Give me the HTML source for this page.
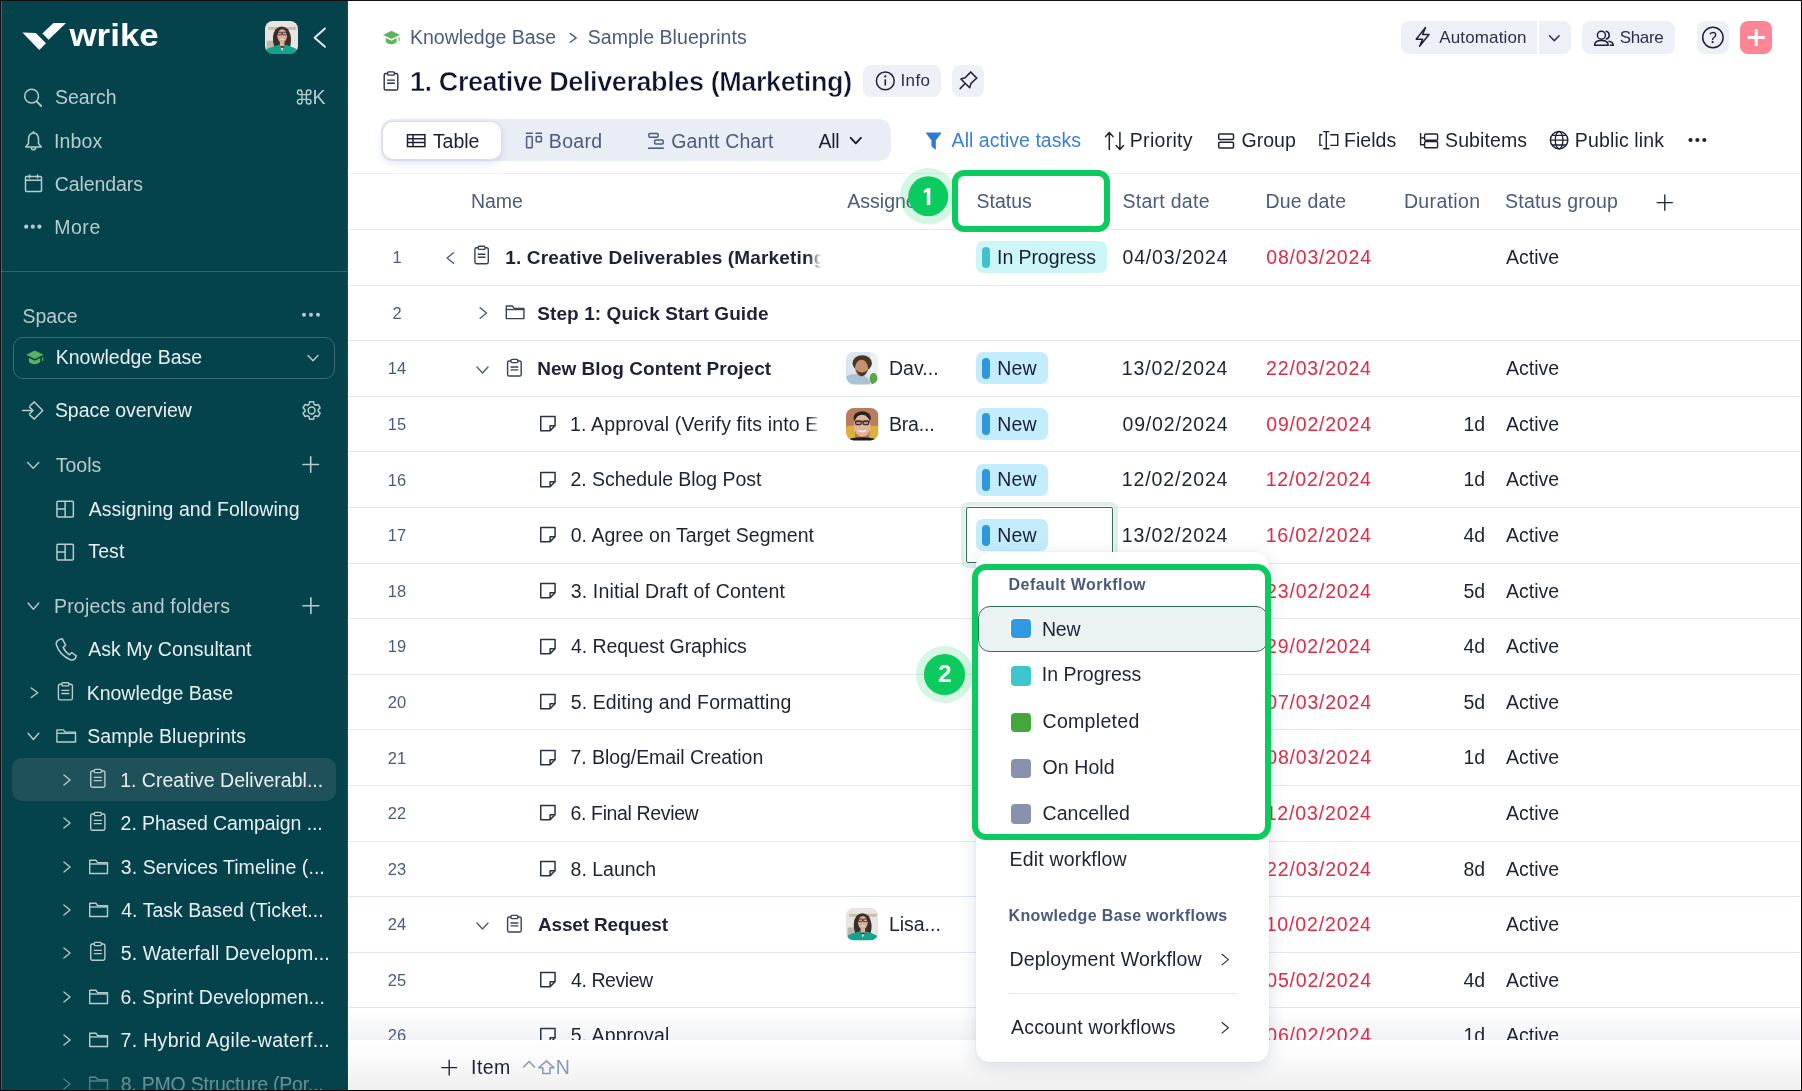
<!DOCTYPE html>
<html><head><meta charset="utf-8"><style>
html,body{margin:0;padding:0;width:1802px;height:1091px;overflow:hidden;background:#fff}
body{position:relative;font-family:"Liberation Sans",sans-serif}
.t{position:absolute;white-space:nowrap;line-height:1}
.i{position:absolute;overflow:visible}
.b{position:absolute}
#w{position:absolute;left:0;top:0;width:1802px;height:1091px;will-change:transform}
</style></head><body><div id="w">
<div class="b" style="left:0px;top:0px;width:348px;height:1091px;background:#05434c"></div>
<div class="b" style="left:347px;top:0px;width:1px;height:1091px;background:#15525a"></div>
<svg class="i" style="left:18px;top:18px;" width="150" height="36" viewBox="18 18 150 36"><path d="M22.4 32.6 L35.8 32.9 L46 43.3 L39.3 50 Z" fill="#fff"/><path d="M42.4 33.5 L53.5 22.9 L66 22.9 L48.6 39.8 Z" fill="#fff"/></svg>
<svg class="i" style="left:66px;top:18px;" width="100" height="34" viewBox="66 18 100 34"><text x="69.4" y="46.4" font-family="Liberation Sans" font-weight="700" font-size="30.5" fill="#fff" textLength="89.4" lengthAdjust="spacingAndGlyphs">wrike</text></svg>
<svg class="i" style="left:265px;top:21px;" width="33" height="33" viewBox="265 21 33 33"><defs><clipPath id="avlisa21"><rect x="265" y="21" width="33" height="33" rx="7.92"/></clipPath><filter id="favlisa21" x="-10%" y="-10%" width="120%" height="120%"><feGaussianBlur stdDeviation="0.35"/></filter></defs><g clip-path="url(#avlisa21)"><g filter="url(#favlisa21)"><rect x="265" y="21" width="33" height="33" fill="#e6e5e1"/><rect x="268.30" y="26.94" width="28.05" height="2.97" fill="#cbbba8"/><rect x="266.65" y="40.80" width="6.60" height="8.25" fill="#bfb7aa"/><path d="M274.24 47.40 Q270.94 35.85 275.56 29.25 Q281.50 23.64 288.10 29.25 Q293.05 37.50 289.75 48.06 Z" fill="#3b2f29"/><ellipse cx="282.16" cy="35.85" rx="4.95" ry="6.60" fill="#d9ae96"/><rect x="277.54" y="32.22" width="4.29" height="2.64" rx="0.66" fill="none" stroke="#2a2220" stroke-width="0.83"/><rect x="282.49" y="32.22" width="4.29" height="2.64" rx="0.66" fill="none" stroke="#2a2220" stroke-width="0.83"/><path d="M279.85 39.15 Q282.16 40.80 284.80 39.15" fill="#fff"/><rect x="279.85" y="41.46" width="4.62" height="4.62" fill="#dcb39c"/><path d="M265 54 L266.65 49.05 Q274.90 45.42 279.85 44.76 L282.16 51.36 L284.80 44.76 Q289.75 45.42 296.35 49.05 L298 54 Z" fill="#17a38c"/></g></g></svg>
<svg class="i" style="left:308px;top:24px;" width="22" height="28" viewBox="308 24 22 28"><path d="M325 28.5 L314.6 37.7 L325 46.8" fill="none" stroke="#e9eff0" stroke-width="1.9" stroke-linecap="round" stroke-linejoin="round"/></svg>
<svg class="i" style="left:20px;top:84px;" width="26" height="26" viewBox="20 84 26 26"><circle cx="31.6" cy="96.2" r="6.9" fill="none" stroke="#b9cbce" stroke-width="1.5"/><path d="M36.6 101.4 L41.2 106" stroke="#b9cbce" stroke-width="1.8" stroke-linecap="round"/></svg>
<div class="t" style="left:55.02px;top:87.94px;font-size:19.5px;color:#b9cbce;font-weight:400;letter-spacing:-0.055px;">Search</div>
<svg class="i" style="left:294px;top:87px;" width="20" height="20" viewBox="294 87 20 20"><path d="M302 92.3 A2.3 2.3 0 1 0 299.7 94.6 H308.7 A2.3 2.3 0 1 0 306.4 92.3 V101.7 A2.3 2.3 0 1 0 308.7 99.4 H299.7 A2.3 2.3 0 1 0 302 101.7 Z" fill="none" stroke="#b9cbce" stroke-width="1.4"/></svg>
<div class="t" style="left:312.44px;top:87.94px;font-size:19.5px;color:#b9cbce;font-weight:400;letter-spacing:0.000px;">K</div>
<svg class="i" style="left:20px;top:126px;" width="26" height="28" viewBox="20 126 26 28"><path d="M28.5 140 Q28.5 133 33.5 133 Q38.5 133 38.5 140 L38.5 143.5 L41.3 147 L25.7 147 L28.5 143.5 Z" fill="none" stroke="#b9cbce" stroke-width="1.5" stroke-linejoin="round"/><path d="M33.5 131 v2" stroke="#b9cbce" stroke-width="1.5"/><path d="M31.3 147.6 a2.2 2.2 0 0 0 4.4 0" fill="none" stroke="#b9cbce" stroke-width="1.5"/></svg>
<div class="t" style="left:53.95px;top:131.94px;font-size:19.5px;color:#b9cbce;font-weight:400;letter-spacing:0.168px;">Inbox</div>
<svg class="i" style="left:20px;top:170px;" width="26" height="26" viewBox="20 170 26 26"><rect x="25.5" y="176.5" width="16" height="15" rx="1" fill="none" stroke="#b9cbce" stroke-width="1.5"/><path d="M25.5 180.3 h16 M29.5 174.5 v4 M37.5 174.5 v4" stroke="#b9cbce" stroke-width="1.5"/></svg>
<div class="t" style="left:54.73px;top:174.94px;font-size:19.5px;color:#b9cbce;font-weight:400;letter-spacing:-0.070px;">Calendars</div>
<svg class="i" style="left:20px;top:220px;" width="26" height="14" viewBox="20 220 26 14"><circle cx="26.2" cy="226.7" r="2.1" fill="#b9cbce"/><circle cx="32.8" cy="226.7" r="2.1" fill="#b9cbce"/><circle cx="39.4" cy="226.7" r="2.1" fill="#b9cbce"/></svg>
<div class="t" style="left:54.14px;top:217.94px;font-size:19.5px;color:#b9cbce;font-weight:400;letter-spacing:0.558px;">More</div>
<div class="b" style="left:1px;top:271px;width:346px;height:1px;background:#336369"></div>
<div class="t" style="left:22.42px;top:306.94px;font-size:19.5px;color:#b9cbce;font-weight:400;letter-spacing:-0.032px;">Space</div>
<svg class="i" style="left:298px;top:308px;" width="26" height="14" viewBox="298 308 26 14"><circle cx="304" cy="314.8" r="2" fill="#b9cbce"/><circle cx="311" cy="314.8" r="2" fill="#b9cbce"/><circle cx="318" cy="314.8" r="2" fill="#b9cbce"/></svg>
<div class="b" style="left:12.5px;top:336.5px;width:322.5px;height:42px;border:1.3px solid #3c6c73;border-radius:10px;box-sizing:border-box"></div>
<svg class="i" style="left:24px;top:348px;" width="24" height="20" viewBox="24 348 24 20"><path d="M26.60 354.75 L34.85 350.70 L43.10 354.75 L34.85 358.80 Z" fill="#5db35a" stroke="#5db35a" stroke-width="0.4" stroke-linejoin="round"/><path d="M29.00 357.90 L34.85 360.70 L40.20 357.90 L40.20 362.30 Q34.85 366.30 29.00 362.30 Z" fill="#5db35a"/><rect x="42.00" y="357.20" width="1.20" height="3.70" rx="0.5" fill="#5db35a"/></svg>
<div class="t" style="left:55.74px;top:347.94px;font-size:19.5px;color:#e9eff0;font-weight:400;letter-spacing:-0.001px;">Knowledge Base</div>
<svg class="i" style="left:300px;top:350px;" width="26" height="16" viewBox="300 350 26 16"><path d="M308.0 355.59999999999997 L313 360.8 L318.0 355.59999999999997" fill="none" stroke="#b9cbce" stroke-width="1.4" stroke-linecap="round" stroke-linejoin="round"/></svg>
<svg class="i" style="left:18px;top:398px;" width="30" height="26" viewBox="18 398 30 26"><path d="M29.6 406.2 L34.3 401.9 L42.7 410.5 L34.3 419.1 L29.6 414.8" fill="none" stroke="#b9cbce" stroke-width="1.5" stroke-linejoin="round"/><path d="M22.6 410.5 H33 M29.4 407 L33 410.5 L29.4 414" fill="none" stroke="#b9cbce" stroke-width="1.5" stroke-linecap="round" stroke-linejoin="round"/></svg>
<div class="t" style="left:54.92px;top:400.94px;font-size:19.5px;color:#e9eff0;font-weight:400;letter-spacing:-0.053px;">Space overview</div>
<svg class="i" style="left:298px;top:398px;" width="28" height="26" viewBox="298 398 28 26"><path d="M309.02 404.42 L309.60 401.83 L313.60 401.83 L314.18 404.42 L315.57 405.23 L318.11 404.43 L320.11 407.90 L318.15 409.70 L318.15 411.30 L320.11 413.10 L318.11 416.57 L315.57 415.77 L314.18 416.58 L313.60 419.17 L309.60 419.17 L309.02 416.58 L307.63 415.77 L305.09 416.57 L303.09 413.10 L305.05 411.30 L305.05 409.70 L303.09 407.90 L305.09 404.43 L307.63 405.23 Z" fill="none" stroke="#b9cbce" stroke-width="1.5" stroke-linejoin="round"/><circle cx="311.6" cy="410.5" r="3.4" fill="none" stroke="#b9cbce" stroke-width="1.5"/></svg>
<svg class="i" style="left:22px;top:458px;" width="22" height="14" viewBox="22 458 22 14"><path d="M27.6 462.40000000000003 L33.2 468.2 L38.800000000000004 462.40000000000003" fill="none" stroke="#b9cbce" stroke-width="1.4" stroke-linecap="round" stroke-linejoin="round"/></svg>
<div class="t" style="left:55.81px;top:455.94px;font-size:19.5px;color:#b9cbce;font-weight:400;letter-spacing:-0.015px;">Tools</div>
<svg class="i" style="left:298px;top:453px;" width="26" height="24" viewBox="298 453 26 24"><path d="M302.95 464.5 H318.45 M310.7 456.75 V472.25" stroke="#b9cbce" stroke-width="1.6" stroke-linecap="round"/></svg>
<svg class="i" style="left:54px;top:498px;" width="24" height="24" viewBox="54 498 24 24"><rect x="56.95" y="501.15" width="16.4" height="15.899999999999999" rx="1" fill="none" stroke="#b9cbce" stroke-width="1.5"/><path d="M65.15 501.15 V517.05 M56.95 509.09999999999997 H65.15" stroke="#b9cbce" stroke-width="1.5"/></svg>
<div class="t" style="left:88.70px;top:499.94px;font-size:19.5px;color:#e9eff0;font-weight:400;letter-spacing:0.025px;">Assigning and Following</div>
<svg class="i" style="left:54px;top:541px;" width="24" height="24" viewBox="54 541 24 24"><rect x="56.95" y="544.15" width="16.4" height="15.899999999999999" rx="1" fill="none" stroke="#b9cbce" stroke-width="1.5"/><path d="M65.15 544.15 V560.05 M56.95 552.1 H65.15" stroke="#b9cbce" stroke-width="1.5"/></svg>
<div class="t" style="left:88.31px;top:541.94px;font-size:19.5px;color:#e9eff0;font-weight:400;letter-spacing:0.101px;">Test</div>
<svg class="i" style="left:22px;top:598px;" width="22" height="14" viewBox="22 598 22 14"><path d="M28.049999999999997 603.0 L33.4 609.2 L38.75 603.0" fill="none" stroke="#b9cbce" stroke-width="1.4" stroke-linecap="round" stroke-linejoin="round"/></svg>
<div class="t" style="left:53.94px;top:596.94px;font-size:19.5px;color:#b9cbce;font-weight:400;letter-spacing:0.198px;">Projects and folders</div>
<svg class="i" style="left:298px;top:594px;" width="26" height="24" viewBox="298 594 26 24"><path d="M303.0 605.7 H318.79999999999995 M310.9 597.8000000000001 V613.6" stroke="#b9cbce" stroke-width="1.6" stroke-linecap="round"/></svg>
<svg class="i" style="left:52px;top:634px;" width="28" height="30" viewBox="52 634 28 30"><path d="M59.5 639.5 L62.3 638.8 L65.6 645.2 L63.2 647.4 Q65.2 652.4 69.6 654.8 L71.8 652.5 L76.2 655.9 L75.3 658.6 Q73.5 660.6 70.3 659.7 Q59.8 655.4 56.3 644.8 Q55.6 641.3 59.5 639.5 Z" fill="none" stroke="#b9cbce" stroke-width="1.5" stroke-linejoin="round"/></svg>
<div class="t" style="left:88.20px;top:639.94px;font-size:19.5px;color:#e9eff0;font-weight:400;letter-spacing:0.048px;">Ask My Consultant</div>
<svg class="i" style="left:26px;top:684px;" width="16" height="18" viewBox="26 684 16 18"><path d="M31.25 687.95 L37.75 692.7 L31.25 697.45" fill="none" stroke="#b9cbce" stroke-width="1.4" stroke-linecap="round" stroke-linejoin="round"/></svg>
<svg class="i" style="left:54px;top:680px;" width="24" height="24" viewBox="54 680 24 24"><rect x="58.400000000000006" y="684.3" width="14.0" height="15.600000000000001" rx="1.6" fill="none" stroke="#b9cbce" stroke-width="1.4"/><rect x="61.858000000000004" y="682.7" width="7.0840000000000005" height="3.2" rx="1" fill="#05434c" stroke="#b9cbce" stroke-width="1.4"/><path d="M61.396 690.37 H69.404 M61.396 693.532 H69.404" stroke="#b9cbce" stroke-width="1.4"/></svg>
<div class="t" style="left:86.64px;top:683.94px;font-size:19.5px;color:#e9eff0;font-weight:400;letter-spacing:0.015px;">Knowledge Base</div>
<svg class="i" style="left:22px;top:728px;" width="22" height="14" viewBox="22 728 22 14"><path d="M28.049999999999997 733.3 L33.4 739.5 L38.75 733.3" fill="none" stroke="#b9cbce" stroke-width="1.4" stroke-linecap="round" stroke-linejoin="round"/></svg>
<svg class="i" style="left:54px;top:726px;" width="26" height="20" viewBox="54 726 26 20"><path d="M56.900000000000006 742.0 V729.9000000000001 H63.400000000000006 L65.4 732.1700000000001 H75.5 V742.0 Z" fill="none" stroke="#b9cbce" stroke-width="1.4" stroke-linejoin="round"/><path d="M56.900000000000006 733.25 H75.5" stroke="#b9cbce" stroke-width="1.4"/></svg>
<div class="t" style="left:87.32px;top:726.94px;font-size:19.5px;color:#e9eff0;font-weight:400;letter-spacing:0.032px;">Sample Blueprints</div>
<div class="b" style="left:12.2px;top:757.7px;width:323.8px;height:43.2px;background:#1e5159;border-radius:10px"></div>
<svg class="i" style="left:58px;top:771.6px;" width="18" height="16" viewBox="58 771.6 18 16"><path d="M63.9 774.6 L70.1 779.6 L63.9 784.6" fill="none" stroke="#b9cbce" stroke-width="1.3" stroke-linecap="round" stroke-linejoin="round"/></svg>
<svg class="i" style="left:86px;top:767.6px;" width="24" height="24" viewBox="86 767.6 24 24"><rect x="90.7" y="770.6" width="14.2" height="16.2" rx="1.6" fill="none" stroke="#b9cbce" stroke-width="1.4"/><rect x="94.212" y="769.0000000000001" width="7.176" height="3.2" rx="1" fill="#05434c" stroke="#b9cbce" stroke-width="1.4"/><path d="M93.744 776.94 H101.856 M93.744 780.2040000000001 H101.856" stroke="#b9cbce" stroke-width="1.4"/></svg>
<div class="t" style="left:120.14px;top:770.94px;font-size:19.5px;color:#e9eff0;font-weight:400;letter-spacing:0.017px;">1. Creative Deliverabl...</div>
<svg class="i" style="left:58px;top:815.0500000000001px;" width="18" height="16" viewBox="58 815.0500000000001 18 16"><path d="M63.9 818.0500000000001 L70.1 823.0500000000001 L63.9 828.0500000000001" fill="none" stroke="#b9cbce" stroke-width="1.3" stroke-linecap="round" stroke-linejoin="round"/></svg>
<svg class="i" style="left:86px;top:811.0500000000001px;" width="24" height="24" viewBox="86 811.0500000000001 24 24"><rect x="90.7" y="814.0500000000001" width="14.2" height="16.2" rx="1.6" fill="none" stroke="#b9cbce" stroke-width="1.4"/><rect x="94.212" y="812.4500000000002" width="7.176" height="3.2" rx="1" fill="#05434c" stroke="#b9cbce" stroke-width="1.4"/><path d="M93.744 820.3900000000001 H101.856 M93.744 823.6540000000001 H101.856" stroke="#b9cbce" stroke-width="1.4"/></svg>
<div class="t" style="left:120.62px;top:813.94px;font-size:19.5px;color:#e9eff0;font-weight:400;letter-spacing:-0.078px;">2. Phased Campaign ...</div>
<svg class="i" style="left:58px;top:858.5px;" width="18" height="16" viewBox="58 858.5 18 16"><path d="M63.9 861.5 L70.1 866.5 L63.9 871.5" fill="none" stroke="#b9cbce" stroke-width="1.3" stroke-linecap="round" stroke-linejoin="round"/></svg>
<svg class="i" style="left:86px;top:856.5px;" width="26" height="20" viewBox="86 856.5 26 20"><path d="M89.7 873.0 V859.8000000000001 H95.912 L97.832 862.312 H107.5 V873.0 Z" fill="none" stroke="#b9cbce" stroke-width="1.4" stroke-linejoin="round"/><path d="M89.7 863.48 H107.5" stroke="#b9cbce" stroke-width="1.4"/></svg>
<div class="t" style="left:120.82px;top:857.94px;font-size:19.5px;color:#e9eff0;font-weight:400;letter-spacing:0.055px;">3. Services Timeline (...</div>
<svg class="i" style="left:58px;top:901.95px;" width="18" height="16" viewBox="58 901.95 18 16"><path d="M63.9 904.95 L70.1 909.95 L63.9 914.95" fill="none" stroke="#b9cbce" stroke-width="1.3" stroke-linecap="round" stroke-linejoin="round"/></svg>
<svg class="i" style="left:86px;top:899.95px;" width="26" height="20" viewBox="86 899.95 26 20"><path d="M89.7 916.45 V903.2500000000001 H95.912 L97.832 905.7620000000001 H107.5 V916.45 Z" fill="none" stroke="#b9cbce" stroke-width="1.4" stroke-linejoin="round"/><path d="M89.7 906.9300000000001 H107.5" stroke="#b9cbce" stroke-width="1.4"/></svg>
<div class="t" style="left:121.21px;top:900.94px;font-size:19.5px;color:#e9eff0;font-weight:400;letter-spacing:0.035px;">4. Task Based (Ticket...</div>
<svg class="i" style="left:58px;top:945.4000000000001px;" width="18" height="16" viewBox="58 945.4000000000001 18 16"><path d="M63.9 948.4000000000001 L70.1 953.4000000000001 L63.9 958.4000000000001" fill="none" stroke="#b9cbce" stroke-width="1.3" stroke-linecap="round" stroke-linejoin="round"/></svg>
<svg class="i" style="left:86px;top:941.4000000000001px;" width="24" height="24" viewBox="86 941.4000000000001 24 24"><rect x="90.7" y="944.4000000000001" width="14.2" height="16.2" rx="1.6" fill="none" stroke="#b9cbce" stroke-width="1.4"/><rect x="94.212" y="942.8000000000002" width="7.176" height="3.2" rx="1" fill="#05434c" stroke="#b9cbce" stroke-width="1.4"/><path d="M93.744 950.7400000000001 H101.856 M93.744 954.0040000000001 H101.856" stroke="#b9cbce" stroke-width="1.4"/></svg>
<div class="t" style="left:120.82px;top:943.94px;font-size:19.5px;color:#e9eff0;font-weight:400;letter-spacing:0.063px;">5. Waterfall Developm...</div>
<svg class="i" style="left:58px;top:988.85px;" width="18" height="16" viewBox="58 988.85 18 16"><path d="M63.9 991.85 L70.1 996.85 L63.9 1001.85" fill="none" stroke="#b9cbce" stroke-width="1.3" stroke-linecap="round" stroke-linejoin="round"/></svg>
<svg class="i" style="left:86px;top:986.85px;" width="26" height="20" viewBox="86 986.85 26 20"><path d="M89.7 1003.35 V990.1500000000001 H95.912 L97.832 992.662 H107.5 V1003.35 Z" fill="none" stroke="#b9cbce" stroke-width="1.4" stroke-linejoin="round"/><path d="M89.7 993.83 H107.5" stroke="#b9cbce" stroke-width="1.4"/></svg>
<div class="t" style="left:120.62px;top:987.94px;font-size:19.5px;color:#e9eff0;font-weight:400;letter-spacing:0.021px;">6. Sprint Developmen...</div>
<svg class="i" style="left:58px;top:1032.3000000000002px;" width="18" height="16" viewBox="58 1032.3000000000002 18 16"><path d="M63.9 1035.3000000000002 L70.1 1040.3000000000002 L63.9 1045.3000000000002" fill="none" stroke="#b9cbce" stroke-width="1.3" stroke-linecap="round" stroke-linejoin="round"/></svg>
<svg class="i" style="left:86px;top:1030.3000000000002px;" width="26" height="20" viewBox="86 1030.3000000000002 26 20"><path d="M89.7 1046.8 V1033.6000000000001 H95.912 L97.832 1036.112 H107.5 V1046.8 Z" fill="none" stroke="#b9cbce" stroke-width="1.4" stroke-linejoin="round"/><path d="M89.7 1037.2800000000002 H107.5" stroke="#b9cbce" stroke-width="1.4"/></svg>
<div class="t" style="left:120.62px;top:1030.94px;font-size:19.5px;color:#e9eff0;font-weight:400;letter-spacing:0.308px;">7. Hybrid Agile-waterf...</div>
<svg class="i" style="left:58px;top:1075.75px;" width="18" height="16" viewBox="58 1075.75 18 16"><path d="M63.9 1078.75 L70.1 1083.75 L63.9 1088.75" fill="none" stroke="#b9cbce" stroke-width="1.3" stroke-linecap="round" stroke-linejoin="round"/></svg>
<svg class="i" style="left:86px;top:1073.75px;" width="26" height="20" viewBox="86 1073.75 26 20"><path d="M89.7 1090.2499999999998 V1077.05 H95.912 L97.832 1079.562 H107.5 V1090.2499999999998 Z" fill="none" stroke="#b9cbce" stroke-width="1.4" stroke-linejoin="round"/><path d="M89.7 1080.73 H107.5" stroke="#b9cbce" stroke-width="1.4"/></svg>
<div class="t" style="left:120.72px;top:1074.94px;font-size:19.5px;color:#e9eff0;font-weight:400;letter-spacing:-0.223px;">8. PMO Structure (Por...</div>
<div class="b" style="left:0px;top:1062px;width:348px;height:29px;background:linear-gradient(rgba(5,67,76,0),rgba(5,67,76,0.55) 60%,rgba(5,67,76,0.6))"></div>
<svg class="i" style="left:380px;top:28px;" width="24" height="20" viewBox="380 28 24 20"><path d="M383.50 34.93 L391.50 31.00 L399.50 34.93 L391.50 38.86 Z" fill="#5db35a" stroke="#5db35a" stroke-width="0.4" stroke-linejoin="round"/><path d="M385.83 37.98 L391.50 40.70 L396.69 37.98 L396.69 42.25 Q391.50 46.13 385.83 42.25 Z" fill="#5db35a"/><rect x="398.44" y="37.30" width="1.16" height="3.59" rx="0.5" fill="#5db35a"/></svg>
<div class="t" style="left:410.04px;top:27.94px;font-size:19.5px;color:#4b5b7e;font-weight:400;letter-spacing:-0.024px;">Knowledge Base</div>
<svg class="i" style="left:564px;top:30px;" width="16" height="16" viewBox="564 30 16 16"><path d="M570.2 33.6 L576.2 37.9 L570.2 42.199999999999996" fill="none" stroke="#4b5b7e" stroke-width="1.4" stroke-linecap="round" stroke-linejoin="round"/></svg>
<div class="t" style="left:587.72px;top:27.94px;font-size:19.5px;color:#4b5b7e;font-weight:400;letter-spacing:0.045px;">Sample Blueprints</div>
<svg class="i" style="left:380px;top:68px;" width="24" height="26" viewBox="380 68 24 26"><rect x="384.2" y="73.5" width="13.6" height="16.5" rx="1.6" fill="none" stroke="#2a3047" stroke-width="1.4"/><rect x="387.55" y="71.9" width="6.9" height="3.2" rx="1" fill="#fff" stroke="#2a3047" stroke-width="1.4"/><path d="M387.1 80.17 H394.9 M387.1 83.29 H394.9" stroke="#2a3047" stroke-width="1.4"/></svg>
<div class="t" style="left:409.98px;top:68.59px;font-size:27px;color:#0e1430;font-weight:700;letter-spacing:-0.401px;-webkit-text-stroke:0.5px #fff">1. Creative Deliverables (Marketing)</div>
<div class="b" style="left:863.2px;top:65.1px;width:77.7px;height:31.9px;background:#edf0f7;border-radius:8px"></div>
<svg class="i" style="left:872px;top:68px;" width="28" height="28" viewBox="872 68 28 28"><circle cx="885.3" cy="80.9" r="8.9" fill="none" stroke="#1d2236" stroke-width="1.5"/><circle cx="885.3" cy="76.4" r="1.1" fill="#1d2236"/><path d="M885.3 79.3 V85.5" stroke="#1d2236" stroke-width="1.6"/></svg>
<div class="t" style="left:900.47px;top:72.06px;font-size:17px;color:#2a3047;font-weight:400;letter-spacing:0.368px;">Info</div>
<div class="b" style="left:952.1px;top:65.1px;width:31.9px;height:31.9px;background:#edf0f7;border-radius:8px"></div>
<svg class="i" style="left:955px;top:68px;" width="26" height="26" viewBox="955 68 26 26"><path d="M970.6 71.9 L976.9 78.2 L975.4 79.2 L970.9 83.6 L969.7 87.8 L960.9 79 L965.1 77.8 L969.5 73.4 Z" fill="none" stroke="#1d2236" stroke-width="1.5" stroke-linejoin="round"/><path d="M964.9 83.8 L960.1 88.6" stroke="#1d2236" stroke-width="1.5" stroke-linecap="round"/></svg>
<div class="b" style="left:1401.1px;top:21.3px;width:169.8px;height:32.4px;background:#edf0f7;border-radius:8px"></div>
<div class="b" style="left:1537px;top:21.3px;width:1.8px;height:32.4px;background:#fff"></div>
<svg class="i" style="left:1410px;top:24px;" width="26" height="26" viewBox="1410 24 26 26"><path d="M1425.5 27.4 L1416.2 39.2 L1422.6 39.2 L1419.6 46.2 L1429 34.5 L1422.6 34.5 Z" fill="none" stroke="#1d2236" stroke-width="1.5" stroke-linejoin="round"/></svg>
<div class="t" style="left:1439.30px;top:29.06px;font-size:17px;color:#2a3047;font-weight:400;letter-spacing:0.132px;">Automation</div>
<svg class="i" style="left:1546px;top:32px;" width="18" height="12" viewBox="1546 32 18 12"><path d="M1549.5 35.7 L1554.3 40.7 L1559.1 35.7" fill="none" stroke="#2a3047" stroke-width="1.5" stroke-linecap="round" stroke-linejoin="round"/></svg>
<div class="b" style="left:1582px;top:21.3px;width:92.8px;height:32.4px;background:#edf0f7;border-radius:8px"></div>
<svg class="i" style="left:1590px;top:28px;" width="28" height="22" viewBox="1590 28 28 22"><circle cx="1601.4" cy="35.2" r="4" fill="none" stroke="#1d2236" stroke-width="1.5"/><path d="M1594.6 45.3 Q1594.6 40.6 1601.4 40.6 Q1608.2 40.6 1608.2 45.3 Z" fill="none" stroke="#1d2236" stroke-width="1.5" stroke-linejoin="round"/><path d="M1606.3 31.3 A4 4 0 0 1 1606.3 39 M1609 41.2 Q1613.2 42 1613.2 45.3 H1610.3" fill="none" stroke="#1d2236" stroke-width="1.5" stroke-linecap="round"/></svg>
<div class="t" style="left:1619.63px;top:29.06px;font-size:17px;color:#2a3047;font-weight:400;letter-spacing:-0.294px;">Share</div>
<div class="b" style="left:1697px;top:21.3px;width:32px;height:32.4px;background:#edf0f7;border-radius:8px"></div>
<svg class="i" style="left:1700px;top:25px;" width="26" height="26" viewBox="1700 25 26 26"><circle cx="1712.9" cy="37.5" r="10.2" fill="none" stroke="#1d2236" stroke-width="1.5"/></svg>
<svg class="i" style="left:1704px;top:28px;" width="18" height="20" viewBox="1704 28 18 20"><path d="M1710.3 33.8 Q1711.4 32.4 1713.1 32.4 Q1715.7 32.6 1715.7 34.9 Q1715.7 36.3 1714.3 37.3 Q1712.6 38.5 1712.6 39.5" fill="none" stroke="#1d2236" stroke-width="1.4" stroke-linecap="round"/><circle cx="1712.6" cy="42.1" r="1.15" fill="#1d2236"/></svg>
<div class="b" style="left:1740.3px;top:21.3px;width:31.9px;height:32.4px;background:#ff8496;border-radius:8px"></div>
<svg class="i" style="left:1744px;top:25px;" width="26" height="26" viewBox="1744 25 26 26"><path d="M1747.7 37.5 H1764.7 M1756.2 29.0 V46.0" stroke="#fff" stroke-width="3.0" stroke-linecap="butt"/></svg>
<div class="b" style="left:381.4px;top:119.3px;width:509.3px;height:42.2px;background:#e9edf6;border-radius:12px"></div>
<div class="b" style="left:383.2px;top:121.6px;width:117.7px;height:37.9px;background:#fff;border-radius:10px;box-shadow:0 0 0 1px #d7dfec,0 3px 8px rgba(90,110,150,0.22)"></div>
<svg class="i" style="left:402px;top:130px;" width="28" height="22" viewBox="402 130 28 22"><rect x="407.5" y="134.7" width="17.4" height="11.9" fill="none" stroke="#1d2236" stroke-width="1.5"/><path d="M407.5 138.7 H424.9 M407.5 142.6 H424.9 M413 134.7 V146.6" stroke="#1d2236" stroke-width="1.5"/></svg>
<div class="t" style="left:432.91px;top:131.94px;font-size:19.5px;color:#1a1f33;font-weight:400;letter-spacing:-0.059px;">Table</div>
<svg class="i" style="left:522px;top:129px;" width="24" height="24" viewBox="522 129 24 24"><rect x="526.6" y="136.6" width="5.6" height="11.2" rx="0.8" fill="none" stroke="#4b5b7e" stroke-width="1.5"/><rect x="536.2" y="136.6" width="5.2" height="5.2" rx="0.8" fill="none" stroke="#4b5b7e" stroke-width="1.5"/><path d="M525.9 133.2 H532.8 M535.5 133.2 H542" stroke="#4b5b7e" stroke-width="1.5"/></svg>
<div class="t" style="left:548.84px;top:131.94px;font-size:19.5px;color:#4b5b7e;font-weight:400;letter-spacing:0.315px;">Board</div>
<svg class="i" style="left:644px;top:129px;" width="24" height="24" viewBox="644 129 24 24"><rect x="648.8" y="133.6" width="9.4" height="3.6" rx="1.2" fill="none" stroke="#4b5b7e" stroke-width="1.5"/><rect x="654.6" y="140.1" width="8.6" height="3.8" rx="1.2" fill="none" stroke="#4b5b7e" stroke-width="1.5"/><path d="M648.1 148.2 H663.8" stroke="#4b5b7e" stroke-width="1.6"/></svg>
<div class="t" style="left:671.23px;top:131.94px;font-size:19.5px;color:#4b5b7e;font-weight:400;letter-spacing:0.145px;">Gantt Chart</div>
<div class="t" style="left:818.50px;top:131.94px;font-size:19.5px;color:#1a1f33;font-weight:400;letter-spacing:-0.289px;">All</div>
<svg class="i" style="left:846px;top:132px;" width="20" height="16" viewBox="846 132 20 16"><path d="M850.6999999999999 137.79999999999998 L855.8 143.4 L860.9 137.79999999999998" fill="none" stroke="#1a1f33" stroke-width="1.9" stroke-linecap="round" stroke-linejoin="round"/></svg>
<svg class="i" style="left:922px;top:129px;" width="24" height="24" viewBox="922 129 24 24"><path d="M926.3 132.9 H941 L935.4 140.4 V149.2 L931.9 146.4 V140.4 Z" fill="#2f7ad6" stroke="#2f7ad6" stroke-width="0.8" stroke-linejoin="round"/></svg>
<div class="t" style="left:951.60px;top:130.94px;font-size:19.5px;color:#3a7fd6;font-weight:400;letter-spacing:0.033px;">All active tasks</div>
<svg class="i" style="left:1102px;top:128px;" width="26" height="26" viewBox="1102 128 26 26"><path d="M1109.3 149.6 V132.6 M1105.6 136.6 L1109.3 132.6 L1113 136.6 M1119.9 132.6 V149.6 M1116.2 145.6 L1119.9 149.6 L1123.6 145.6" fill="none" stroke="#1d2236" stroke-width="1.5" stroke-linecap="round" stroke-linejoin="round"/></svg>
<div class="t" style="left:1129.84px;top:130.94px;font-size:19.5px;color:#1d2236;font-weight:400;letter-spacing:0.288px;">Priority</div>
<svg class="i" style="left:1214px;top:129px;" width="24" height="24" viewBox="1214 129 24 24"><rect x="1218.7" y="133.9" width="14.8" height="5.6" rx="1" fill="none" stroke="#1d2236" stroke-width="1.5"/><rect x="1218.7" y="142.3" width="14.8" height="5.6" rx="1" fill="none" stroke="#1d2236" stroke-width="1.5"/></svg>
<div class="t" style="left:1241.43px;top:130.94px;font-size:19.5px;color:#1d2236;font-weight:400;letter-spacing:0.036px;">Group</div>
<svg class="i" style="left:1316px;top:128px;" width="26" height="26" viewBox="1316 128 26 26"><path d="M1322.3 134.7 H1319.9 V145.4 H1322.3 M1330.2 134.7 H1337.7 V145.4 H1330.2 M1323.2 131.6 H1329.4 M1326.3 131.6 V148.8 M1323.2 148.8 H1329.4" fill="none" stroke="#1d2236" stroke-width="1.4"/></svg>
<div class="t" style="left:1343.94px;top:130.94px;font-size:19.5px;color:#1d2236;font-weight:400;letter-spacing:0.036px;">Fields</div>
<svg class="i" style="left:1416px;top:128px;" width="26" height="26" viewBox="1416 128 26 26"><path d="M1420.6 132.9 V144.7 H1424" fill="none" stroke="#1d2236" stroke-width="1.4"/><path d="M1420.6 137.9 H1424" stroke="#1d2236" stroke-width="1.4"/><rect x="1424.6" y="134" width="13" height="6.2" rx="1.2" fill="none" stroke="#1d2236" stroke-width="1.4"/><rect x="1424.6" y="141.5" width="13" height="6.2" rx="1.2" fill="none" stroke="#1d2236" stroke-width="1.4"/></svg>
<div class="t" style="left:1445.02px;top:130.94px;font-size:19.5px;color:#1d2236;font-weight:400;letter-spacing:0.106px;">Subitems</div>
<svg class="i" style="left:1546px;top:128px;" width="26" height="26" viewBox="1546 128 26 26"><circle cx="1559.1" cy="140.2" r="8.7" fill="none" stroke="#1d2236" stroke-width="1.4"/><ellipse cx="1559.1" cy="140.2" rx="3.8" ry="8.7" fill="none" stroke="#1d2236" stroke-width="1.3"/><path d="M1550.4 140.2 H1567.8 M1552 135.4 H1566.2 M1552 145 H1566.2" stroke="#1d2236" stroke-width="1.3"/></svg>
<div class="t" style="left:1574.84px;top:130.94px;font-size:19.5px;color:#1d2236;font-weight:400;letter-spacing:0.141px;">Public link</div>
<svg class="i" style="left:1684px;top:134px;" width="26" height="12" viewBox="1684 134 26 12"><circle cx="1690.5" cy="140" r="2.1" fill="#1d2236"/><circle cx="1697.4" cy="140" r="2.1" fill="#1d2236"/><circle cx="1704.3" cy="140" r="2.1" fill="#1d2236"/></svg>
<div class="b" style="left:348px;top:173.3px;width:1452px;height:1.2px;background:#eef1f6"></div>
<div class="b" style="left:348px;top:228.9px;width:1452px;height:1.2px;background:#e3e8f0"></div>
<div class="b" style="left:348px;top:284.5px;width:1452px;height:1.2px;background:#e3e8f0"></div>
<div class="b" style="left:348px;top:340.1px;width:1452px;height:1.2px;background:#e3e8f0"></div>
<div class="b" style="left:348px;top:395.70000000000005px;width:1452px;height:1.2px;background:#e3e8f0"></div>
<div class="b" style="left:348px;top:451.3px;width:1452px;height:1.2px;background:#e3e8f0"></div>
<div class="b" style="left:348px;top:506.9px;width:1452px;height:1.2px;background:#e3e8f0"></div>
<div class="b" style="left:348px;top:562.5px;width:1452px;height:1.2px;background:#e3e8f0"></div>
<div class="b" style="left:348px;top:618.1px;width:1452px;height:1.2px;background:#e3e8f0"></div>
<div class="b" style="left:348px;top:673.7px;width:1452px;height:1.2px;background:#e3e8f0"></div>
<div class="b" style="left:348px;top:729.3000000000001px;width:1452px;height:1.2px;background:#e3e8f0"></div>
<div class="b" style="left:348px;top:784.9px;width:1452px;height:1.2px;background:#e3e8f0"></div>
<div class="b" style="left:348px;top:840.5px;width:1452px;height:1.2px;background:#e3e8f0"></div>
<div class="b" style="left:348px;top:896.1px;width:1452px;height:1.2px;background:#e3e8f0"></div>
<div class="b" style="left:348px;top:951.7px;width:1452px;height:1.2px;background:#e3e8f0"></div>
<div class="b" style="left:348px;top:1007.3px;width:1452px;height:1.2px;background:#e3e8f0"></div>
<div class="b" style="left:348px;top:1010px;width:1452px;height:30px;background:linear-gradient(rgba(236,238,243,0),rgba(236,238,243,0.7))"></div>
<div class="t" style="left:471.04px;top:191.94px;font-size:19.5px;color:#4b5b7e;font-weight:400;letter-spacing:-0.043px;">Name</div>
<div class="t" style="left:847.30px;top:191.94px;font-size:19.5px;color:#4b5b7e;font-weight:400;letter-spacing:0.000px;">Assignee</div>
<div class="t" style="left:976.42px;top:191.94px;font-size:19.5px;color:#4b5b7e;font-weight:400;letter-spacing:0.036px;">Status</div>
<div class="t" style="left:1122.42px;top:191.94px;font-size:19.5px;color:#4b5b7e;font-weight:400;letter-spacing:0.280px;">Start date</div>
<div class="t" style="left:1265.54px;top:191.94px;font-size:19.5px;color:#4b5b7e;font-weight:400;letter-spacing:0.195px;">Due date</div>
<div class="t" style="left:1403.94px;top:191.94px;font-size:19.5px;color:#4b5b7e;font-weight:400;letter-spacing:0.345px;">Duration</div>
<div class="t" style="left:1505.12px;top:191.94px;font-size:19.5px;color:#4b5b7e;font-weight:400;letter-spacing:0.199px;">Status group</div>
<svg class="i" style="left:1652px;top:194px;" width="26" height="18" viewBox="1652 194 26 18"><path d="M1657.2 202.6 H1672.3999999999999 M1664.8 195.0 V210.2" stroke="#1d2236" stroke-width="1.35" stroke-linecap="round"/></svg>
<div class="b" style="left:0;top:0;width:1800px;height:1040px;overflow:hidden">
<div class="t" style="left:392.41px;top:249.48px;font-size:16.5px;color:#4b5b7e;font-weight:400;letter-spacing:0.000px;">1</div>
<svg class="i" style="left:443px;top:249.60000000000002px;" width="16" height="16" viewBox="443 249.60000000000002 16 16"><path d="M453.5 252.40000000000003 L447.1 257.6 L453.5 262.8" fill="none" stroke="#4b5b7e" stroke-width="1.4" stroke-linecap="round" stroke-linejoin="round"/></svg>
<svg class="i" style="left:471px;top:243.4px;" width="22" height="24" viewBox="471 243.4 22 24"><rect x="474.9" y="248.20000000000002" width="13.4" height="15.899999999999999" rx="1.6" fill="none" stroke="#3a4058" stroke-width="1.4"/><rect x="478.19599999999997" y="246.6" width="6.808000000000001" height="3.2" rx="1" fill="#fff" stroke="#3a4058" stroke-width="1.4"/><path d="M477.752 254.594 H485.448 M477.752 257.618 H485.448" stroke="#3a4058" stroke-width="1.4"/></svg>
<div class="t" style="left:505.26px;top:248.37px;font-size:19px;color:#1d2236;font-weight:700;letter-spacing:0.157px;">1. Creative Deliverables (Marketing</div>
<div class="t" style="left:1122.52px;top:247.94px;font-size:19.5px;color:#1d2236;font-weight:400;letter-spacing:0.819px;">04/03/2024</div>
<div class="t" style="left:1266.32px;top:247.94px;font-size:19.5px;color:#df2b44;font-weight:400;letter-spacing:0.785px;">08/03/2024</div>
<div class="t" style="left:1506.00px;top:247.94px;font-size:19.5px;color:#1d2236;font-weight:400;letter-spacing:0.008px;">Active</div>
<div class="b" style="left:976.3px;top:241.1px;width:130.4px;height:32.1px;background:#cdf6f8;border-radius:7px"></div>
<div class="b" style="left:981.9px;top:246.6px;width:8.2px;height:21.5px;background:#3ec3cd;border-radius:4px"></div>
<div class="t" style="left:997.04px;top:247.94px;font-size:19.5px;color:#1a1f33;font-weight:400;letter-spacing:-0.070px;">In Progress</div>
<div class="t" style="left:392.41px;top:305.48px;font-size:16.5px;color:#4b5b7e;font-weight:400;letter-spacing:0.000px;">2</div>
<svg class="i" style="left:476px;top:305.2px;" width="16" height="16" viewBox="476 305.2 16 16"><path d="M480.1 308.0 L486.5 313.2 L480.1 318.4" fill="none" stroke="#4b5b7e" stroke-width="1.4" stroke-linecap="round" stroke-linejoin="round"/></svg>
<svg class="i" style="left:502px;top:302.0px;" width="26" height="20" viewBox="502 302.0 26 20"><path d="M506.3 318.6 V306.0 H512.44 L514.34 308.38 H523.9 V318.6 Z" fill="none" stroke="#3a4058" stroke-width="1.4" stroke-linejoin="round"/><path d="M506.3 309.5 H523.9" stroke="#3a4058" stroke-width="1.4"/></svg>
<div class="t" style="left:537.23px;top:304.37px;font-size:19px;color:#1d2236;font-weight:700;letter-spacing:0.091px;">Step 1: Quick Start Guide</div>
<div class="t" style="left:387.82px;top:360.48px;font-size:16.5px;color:#4b5b7e;font-weight:400;letter-spacing:0.000px;">14</div>
<svg class="i" style="left:474px;top:362.8px;" width="18" height="12" viewBox="474 362.8 18 12"><path d="M477.0 366.85 L482.5 372.75 L488.0 366.85" fill="none" stroke="#4b5b7e" stroke-width="1.4" stroke-linecap="round" stroke-linejoin="round"/></svg>
<svg class="i" style="left:503px;top:355.6px;" width="22" height="24" viewBox="503 355.6 22 24"><rect x="507.59999999999997" y="360.6" width="13.6" height="15" rx="1.6" fill="none" stroke="#3a4058" stroke-width="1.4"/><rect x="510.95" y="359.0" width="6.9" height="3.2" rx="1" fill="#fff" stroke="#3a4058" stroke-width="1.4"/><path d="M510.5 366.58000000000004 H518.3 M510.5 369.46000000000004 H518.3" stroke="#3a4058" stroke-width="1.4"/></svg>
<div class="t" style="left:537.16px;top:359.37px;font-size:19px;color:#1d2236;font-weight:700;letter-spacing:0.030px;">New Blog Content Project</div>
<svg class="i" style="left:846.1px;top:352.3px;" width="32.4" height="32.4" viewBox="846.1 352.3 32.4 32.4"><defs><clipPath id="avdav352"><rect x="846.1" y="352.3" width="32.4" height="32.4" rx="7.78"/></clipPath><filter id="favdav352" x="-10%" y="-10%" width="120%" height="120%"><feGaussianBlur stdDeviation="0.35"/></filter></defs><g clip-path="url(#avdav352)"><g filter="url(#favdav352)"><rect x="846.1" y="352.3" width="32.4" height="32.4" fill="#dde5ec"/><rect x="870.40" y="352.3" width="8.10" height="32.4" fill="#eef1f1"/><ellipse cx="855.82" cy="384.70" rx="14.58" ry="10.37" fill="#a9c3d6"/><ellipse cx="862.30" cy="363.64" rx="9.72" ry="8.10" fill="#4a3526"/><ellipse cx="861.65" cy="368.50" rx="6.48" ry="8.42" fill="#c4906f"/><path d="M855.82 370.12 Q861.65 383.08 868.13 370.12 Q861.65 375.63 855.82 370.12 Z" fill="#4d3628"/><ellipse cx="873.64" cy="378.87" rx="3.89" ry="5.83" fill="#5aa845"/></g></g></svg>
<div class="t" style="left:888.94px;top:358.94px;font-size:19.5px;color:#1d2236;font-weight:400;letter-spacing:0.056px;">Dav...</div>
<div class="t" style="left:1121.84px;top:358.94px;font-size:19.5px;color:#1d2236;font-weight:400;letter-spacing:0.894px;">13/02/2024</div>
<div class="t" style="left:1266.12px;top:358.94px;font-size:19.5px;color:#df2b44;font-weight:400;letter-spacing:0.807px;">22/03/2024</div>
<div class="t" style="left:1506.00px;top:358.94px;font-size:19.5px;color:#1d2236;font-weight:400;letter-spacing:0.008px;">Active</div>
<div class="b" style="left:976.2px;top:352.3px;width:71.4px;height:32.1px;background:#c3edfc;border-radius:7px"></div>
<div class="b" style="left:981.8000000000001px;top:357.8px;width:8.2px;height:21.5px;background:#2f98dd;border-radius:4px"></div>
<div class="t" style="left:997.24px;top:358.94px;font-size:19.5px;color:#1a1f33;font-weight:400;letter-spacing:0.181px;">New</div>
<div class="t" style="left:387.82px;top:416.48px;font-size:16.5px;color:#4b5b7e;font-weight:400;letter-spacing:0.000px;">15</div>
<svg class="i" style="left:537px;top:413.20000000000005px;" width="22" height="22" viewBox="537 413.20000000000005 22 22"><path d="M540.75 416.75000000000006 H555.05 V425.9120000000001 L550.112 430.8500000000001 H540.75 Z" fill="none" stroke="#2a3047" stroke-width="1.5" stroke-linejoin="round"/><path d="M555.05 425.9120000000001 H550.112 V430.8500000000001" fill="none" stroke="#2a3047" stroke-width="1.5" stroke-linejoin="round"/></svg>
<div class="t" style="left:570.04px;top:414.94px;font-size:19.5px;color:#1d2236;font-weight:400;letter-spacing:0.146px;">1. Approval (Verify fits into E</div>
<svg class="i" style="left:846.1px;top:407.90000000000003px;" width="32.4" height="32.4" viewBox="846.1 407.90000000000003 32.4 32.4"><defs><clipPath id="avbra407"><rect x="846.1" y="407.90000000000003" width="32.4" height="32.4" rx="7.78"/></clipPath><filter id="favbra407" x="-10%" y="-10%" width="120%" height="120%"><feGaussianBlur stdDeviation="0.35"/></filter></defs><g clip-path="url(#avbra407)"><g filter="url(#favbra407)"><rect x="846.1" y="407.90000000000003" width="32.4" height="32.4" fill="#b97c5c"/><rect x="846.1" y="425.72" width="9.07" height="14.58" rx="2.59" fill="#d9b23a"/><rect x="869.43" y="425.72" width="9.07" height="14.58" rx="2.59" fill="#d9b23a"/><ellipse cx="862.30" cy="417.62" rx="8.75" ry="6.48" fill="#2a2421"/><ellipse cx="862.30" cy="425.72" rx="8.42" ry="11.02" fill="#e3b39a"/><path d="M854.85 421.51 H869.75" stroke="#3a3030" stroke-width="1.30"/><rect x="855.82" y="420.86" width="5.51" height="3.56" rx="0.97" fill="none" stroke="#3a3030" stroke-width="1.30"/><rect x="863.27" y="420.86" width="5.51" height="3.56" rx="0.97" fill="none" stroke="#3a3030" stroke-width="1.30"/><path d="M858.41 430.58 Q862.30 433.17 866.19 430.58" fill="#fff" stroke="#fff" stroke-width="0.97"/><ellipse cx="862.30" cy="440.95" rx="14.58" ry="3.89" fill="#1b1b1b"/></g></g></svg>
<div class="t" style="left:888.94px;top:414.94px;font-size:19.5px;color:#1d2236;font-weight:400;letter-spacing:-0.159px;">Bra...</div>
<div class="t" style="left:1122.52px;top:414.94px;font-size:19.5px;color:#1d2236;font-weight:400;letter-spacing:0.819px;">09/02/2024</div>
<div class="t" style="left:1266.32px;top:414.94px;font-size:19.5px;color:#df2b44;font-weight:400;letter-spacing:0.785px;">09/02/2024</div>
<div class="t" style="left:1463.42px;top:414.94px;font-size:19.5px;color:#1d2236;font-weight:400;letter-spacing:0.000px;">1d</div>
<div class="t" style="left:1506.00px;top:414.94px;font-size:19.5px;color:#1d2236;font-weight:400;letter-spacing:0.008px;">Active</div>
<div class="b" style="left:976.2px;top:407.90000000000003px;width:71.4px;height:32.1px;background:#c3edfc;border-radius:7px"></div>
<div class="b" style="left:981.8000000000001px;top:413.40000000000003px;width:8.2px;height:21.5px;background:#2f98dd;border-radius:4px"></div>
<div class="t" style="left:997.24px;top:414.94px;font-size:19.5px;color:#1a1f33;font-weight:400;letter-spacing:0.181px;">New</div>
<div class="t" style="left:387.82px;top:472.48px;font-size:16.5px;color:#4b5b7e;font-weight:400;letter-spacing:0.000px;">16</div>
<svg class="i" style="left:537px;top:468.8px;" width="22" height="22" viewBox="537 468.8 22 22"><path d="M540.75 472.35 H555.05 V481.51200000000006 L550.112 486.45000000000005 H540.75 Z" fill="none" stroke="#2a3047" stroke-width="1.5" stroke-linejoin="round"/><path d="M555.05 481.51200000000006 H550.112 V486.45000000000005" fill="none" stroke="#2a3047" stroke-width="1.5" stroke-linejoin="round"/></svg>
<div class="t" style="left:570.52px;top:469.94px;font-size:19.5px;color:#1d2236;font-weight:400;letter-spacing:-0.050px;">2. Schedule Blog Post</div>
<div class="t" style="left:1121.84px;top:469.94px;font-size:19.5px;color:#1d2236;font-weight:400;letter-spacing:0.894px;">12/02/2024</div>
<div class="t" style="left:1265.64px;top:469.94px;font-size:19.5px;color:#df2b44;font-weight:400;letter-spacing:0.861px;">12/02/2024</div>
<div class="t" style="left:1463.42px;top:469.94px;font-size:19.5px;color:#1d2236;font-weight:400;letter-spacing:0.000px;">1d</div>
<div class="t" style="left:1506.00px;top:469.94px;font-size:19.5px;color:#1d2236;font-weight:400;letter-spacing:0.008px;">Active</div>
<div class="b" style="left:976.2px;top:463.5px;width:71.4px;height:32.1px;background:#c3edfc;border-radius:7px"></div>
<div class="b" style="left:981.8000000000001px;top:469.0px;width:8.2px;height:21.5px;background:#2f98dd;border-radius:4px"></div>
<div class="t" style="left:997.24px;top:469.94px;font-size:19.5px;color:#1a1f33;font-weight:400;letter-spacing:0.181px;">New</div>
<div class="t" style="left:387.82px;top:527.48px;font-size:16.5px;color:#4b5b7e;font-weight:400;letter-spacing:0.000px;">17</div>
<svg class="i" style="left:537px;top:524.4px;" width="22" height="22" viewBox="537 524.4 22 22"><path d="M540.75 527.9499999999999 H555.05 V537.112 L550.112 542.05 H540.75 Z" fill="none" stroke="#2a3047" stroke-width="1.5" stroke-linejoin="round"/><path d="M555.05 537.112 H550.112 V542.05" fill="none" stroke="#2a3047" stroke-width="1.5" stroke-linejoin="round"/></svg>
<div class="t" style="left:570.72px;top:525.94px;font-size:19.5px;color:#1d2236;font-weight:400;letter-spacing:0.032px;">0. Agree on Target Segment</div>
<div class="t" style="left:1121.84px;top:525.94px;font-size:19.5px;color:#1d2236;font-weight:400;letter-spacing:0.894px;">13/02/2024</div>
<div class="t" style="left:1265.64px;top:525.94px;font-size:19.5px;color:#df2b44;font-weight:400;letter-spacing:0.861px;">16/02/2024</div>
<div class="t" style="left:1463.42px;top:525.94px;font-size:19.5px;color:#1d2236;font-weight:400;letter-spacing:0.000px;">4d</div>
<div class="t" style="left:1506.00px;top:525.94px;font-size:19.5px;color:#1d2236;font-weight:400;letter-spacing:0.008px;">Active</div>
<div class="b" style="left:976.2px;top:519.1px;width:71.4px;height:32.1px;background:#c3edfc;border-radius:7px"></div>
<div class="b" style="left:981.8000000000001px;top:524.6px;width:8.2px;height:21.5px;background:#2f98dd;border-radius:4px"></div>
<div class="t" style="left:997.24px;top:525.94px;font-size:19.5px;color:#1a1f33;font-weight:400;letter-spacing:0.181px;">New</div>
<div class="t" style="left:387.82px;top:583.48px;font-size:16.5px;color:#4b5b7e;font-weight:400;letter-spacing:0.000px;">18</div>
<svg class="i" style="left:537px;top:580.0px;" width="22" height="22" viewBox="537 580.0 22 22"><path d="M540.75 583.55 H555.05 V592.712 L550.112 597.65 H540.75 Z" fill="none" stroke="#2a3047" stroke-width="1.5" stroke-linejoin="round"/><path d="M555.05 592.712 H550.112 V597.65" fill="none" stroke="#2a3047" stroke-width="1.5" stroke-linejoin="round"/></svg>
<div class="t" style="left:570.72px;top:581.94px;font-size:19.5px;color:#1d2236;font-weight:400;letter-spacing:0.149px;">3. Initial Draft of Content</div>
<div class="t" style="left:1266.12px;top:581.94px;font-size:19.5px;color:#df2b44;font-weight:400;letter-spacing:0.807px;">23/02/2024</div>
<div class="t" style="left:1463.42px;top:581.94px;font-size:19.5px;color:#1d2236;font-weight:400;letter-spacing:0.000px;">5d</div>
<div class="t" style="left:1506.00px;top:581.94px;font-size:19.5px;color:#1d2236;font-weight:400;letter-spacing:0.008px;">Active</div>
<div class="t" style="left:387.82px;top:638.48px;font-size:16.5px;color:#4b5b7e;font-weight:400;letter-spacing:0.000px;">19</div>
<svg class="i" style="left:537px;top:635.6px;" width="22" height="22" viewBox="537 635.6 22 22"><path d="M540.75 639.15 H555.05 V648.312 L550.112 653.25 H540.75 Z" fill="none" stroke="#2a3047" stroke-width="1.5" stroke-linejoin="round"/><path d="M555.05 648.312 H550.112 V653.25" fill="none" stroke="#2a3047" stroke-width="1.5" stroke-linejoin="round"/></svg>
<div class="t" style="left:571.11px;top:636.94px;font-size:19.5px;color:#1d2236;font-weight:400;letter-spacing:-0.115px;">4. Request Graphics</div>
<div class="t" style="left:1266.12px;top:636.94px;font-size:19.5px;color:#df2b44;font-weight:400;letter-spacing:0.807px;">29/02/2024</div>
<div class="t" style="left:1463.42px;top:636.94px;font-size:19.5px;color:#1d2236;font-weight:400;letter-spacing:0.000px;">4d</div>
<div class="t" style="left:1506.00px;top:636.94px;font-size:19.5px;color:#1d2236;font-weight:400;letter-spacing:0.008px;">Active</div>
<div class="t" style="left:387.82px;top:694.48px;font-size:16.5px;color:#4b5b7e;font-weight:400;letter-spacing:0.000px;">20</div>
<svg class="i" style="left:537px;top:691.2px;" width="22" height="22" viewBox="537 691.2 22 22"><path d="M540.75 694.75 H555.05 V703.912 L550.112 708.85 H540.75 Z" fill="none" stroke="#2a3047" stroke-width="1.5" stroke-linejoin="round"/><path d="M555.05 703.912 H550.112 V708.85" fill="none" stroke="#2a3047" stroke-width="1.5" stroke-linejoin="round"/></svg>
<div class="t" style="left:570.72px;top:692.94px;font-size:19.5px;color:#1d2236;font-weight:400;letter-spacing:0.114px;">5. Editing and Formatting</div>
<div class="t" style="left:1266.32px;top:692.94px;font-size:19.5px;color:#df2b44;font-weight:400;letter-spacing:0.785px;">07/03/2024</div>
<div class="t" style="left:1463.42px;top:692.94px;font-size:19.5px;color:#1d2236;font-weight:400;letter-spacing:0.000px;">5d</div>
<div class="t" style="left:1506.00px;top:692.94px;font-size:19.5px;color:#1d2236;font-weight:400;letter-spacing:0.008px;">Active</div>
<div class="t" style="left:387.82px;top:750.48px;font-size:16.5px;color:#4b5b7e;font-weight:400;letter-spacing:0.000px;">21</div>
<svg class="i" style="left:537px;top:746.8000000000001px;" width="22" height="22" viewBox="537 746.8000000000001 22 22"><path d="M540.75 750.35 H555.05 V759.5120000000001 L550.112 764.45 H540.75 Z" fill="none" stroke="#2a3047" stroke-width="1.5" stroke-linejoin="round"/><path d="M555.05 759.5120000000001 H550.112 V764.45" fill="none" stroke="#2a3047" stroke-width="1.5" stroke-linejoin="round"/></svg>
<div class="t" style="left:570.52px;top:747.94px;font-size:19.5px;color:#1d2236;font-weight:400;letter-spacing:-0.061px;">7. Blog/Email Creation</div>
<div class="t" style="left:1266.32px;top:747.94px;font-size:19.5px;color:#df2b44;font-weight:400;letter-spacing:0.785px;">08/03/2024</div>
<div class="t" style="left:1463.42px;top:747.94px;font-size:19.5px;color:#1d2236;font-weight:400;letter-spacing:0.000px;">1d</div>
<div class="t" style="left:1506.00px;top:747.94px;font-size:19.5px;color:#1d2236;font-weight:400;letter-spacing:0.008px;">Active</div>
<div class="t" style="left:387.82px;top:805.48px;font-size:16.5px;color:#4b5b7e;font-weight:400;letter-spacing:0.000px;">22</div>
<svg class="i" style="left:537px;top:802.4px;" width="22" height="22" viewBox="537 802.4 22 22"><path d="M540.75 805.9499999999999 H555.05 V815.112 L550.112 820.05 H540.75 Z" fill="none" stroke="#2a3047" stroke-width="1.5" stroke-linejoin="round"/><path d="M555.05 815.112 H550.112 V820.05" fill="none" stroke="#2a3047" stroke-width="1.5" stroke-linejoin="round"/></svg>
<div class="t" style="left:570.52px;top:803.94px;font-size:19.5px;color:#1d2236;font-weight:400;letter-spacing:-0.365px;">6. Final Review</div>
<div class="t" style="left:1265.64px;top:803.94px;font-size:19.5px;color:#df2b44;font-weight:400;letter-spacing:0.861px;">12/03/2024</div>
<div class="t" style="left:1506.00px;top:803.94px;font-size:19.5px;color:#1d2236;font-weight:400;letter-spacing:0.008px;">Active</div>
<div class="t" style="left:387.82px;top:861.48px;font-size:16.5px;color:#4b5b7e;font-weight:400;letter-spacing:0.000px;">23</div>
<svg class="i" style="left:537px;top:858.0px;" width="22" height="22" viewBox="537 858.0 22 22"><path d="M540.75 861.55 H555.05 V870.712 L550.112 875.65 H540.75 Z" fill="none" stroke="#2a3047" stroke-width="1.5" stroke-linejoin="round"/><path d="M555.05 870.712 H550.112 V875.65" fill="none" stroke="#2a3047" stroke-width="1.5" stroke-linejoin="round"/></svg>
<div class="t" style="left:570.62px;top:859.94px;font-size:19.5px;color:#1d2236;font-weight:400;letter-spacing:-0.008px;">8. Launch</div>
<div class="t" style="left:1266.12px;top:859.94px;font-size:19.5px;color:#df2b44;font-weight:400;letter-spacing:0.807px;">22/03/2024</div>
<div class="t" style="left:1463.42px;top:859.94px;font-size:19.5px;color:#1d2236;font-weight:400;letter-spacing:0.000px;">8d</div>
<div class="t" style="left:1506.00px;top:859.94px;font-size:19.5px;color:#1d2236;font-weight:400;letter-spacing:0.008px;">Active</div>
<div class="t" style="left:387.82px;top:916.48px;font-size:16.5px;color:#4b5b7e;font-weight:400;letter-spacing:0.000px;">24</div>
<svg class="i" style="left:474px;top:918.8000000000001px;" width="18" height="12" viewBox="474 918.8000000000001 18 12"><path d="M477.0 922.85 L482.5 928.7500000000001 L488.0 922.85" fill="none" stroke="#4b5b7e" stroke-width="1.4" stroke-linecap="round" stroke-linejoin="round"/></svg>
<svg class="i" style="left:503px;top:911.6px;" width="22" height="24" viewBox="503 911.6 22 24"><rect x="507.59999999999997" y="916.6" width="13.6" height="15" rx="1.6" fill="none" stroke="#3a4058" stroke-width="1.4"/><rect x="510.95" y="915.0000000000001" width="6.9" height="3.2" rx="1" fill="#fff" stroke="#3a4058" stroke-width="1.4"/><path d="M510.5 922.58 H518.3 M510.5 925.46 H518.3" stroke="#3a4058" stroke-width="1.4"/></svg>
<div class="t" style="left:537.92px;top:915.37px;font-size:19px;color:#1d2236;font-weight:700;letter-spacing:-0.149px;">Asset Request</div>
<svg class="i" style="left:846.1px;top:908.3000000000001px;" width="32.4" height="32.4" viewBox="846.1 908.3000000000001 32.4 32.4"><defs><clipPath id="avlisa908"><rect x="846.1" y="908.3000000000001" width="32.4" height="32.4" rx="7.78"/></clipPath><filter id="favlisa908" x="-10%" y="-10%" width="120%" height="120%"><feGaussianBlur stdDeviation="0.35"/></filter></defs><g clip-path="url(#avlisa908)"><g filter="url(#favlisa908)"><rect x="846.1" y="908.3000000000001" width="32.4" height="32.4" fill="#e6e5e1"/><rect x="849.34" y="914.13" width="27.54" height="2.92" fill="#cbbba8"/><rect x="847.72" y="927.74" width="6.48" height="8.10" fill="#bfb7aa"/><path d="M855.17 934.22 Q851.93 922.88 856.47 916.40 Q862.30 910.89 868.78 916.40 Q873.64 924.50 870.40 934.87 Z" fill="#3b2f29"/><ellipse cx="862.95" cy="922.88" rx="4.86" ry="6.48" fill="#d9ae96"/><rect x="858.41" y="919.32" width="4.21" height="2.59" rx="0.65" fill="none" stroke="#2a2220" stroke-width="0.81"/><rect x="863.27" y="919.32" width="4.21" height="2.59" rx="0.65" fill="none" stroke="#2a2220" stroke-width="0.81"/><path d="M860.68 926.12 Q862.95 927.74 865.54 926.12" fill="#fff"/><rect x="860.68" y="928.39" width="4.54" height="4.54" fill="#dcb39c"/><path d="M846.1 940.7 L847.72 935.84 Q855.82 932.28 860.68 931.63 L862.95 938.11 L865.54 931.63 Q870.40 932.28 876.88 935.84 L878.5 940.7 Z" fill="#17a38c"/></g></g></svg>
<div class="t" style="left:888.94px;top:914.94px;font-size:19.5px;color:#1d2236;font-weight:400;letter-spacing:-0.025px;">Lisa...</div>
<div class="t" style="left:1265.64px;top:914.94px;font-size:19.5px;color:#df2b44;font-weight:400;letter-spacing:0.861px;">10/02/2024</div>
<div class="t" style="left:1506.00px;top:914.94px;font-size:19.5px;color:#1d2236;font-weight:400;letter-spacing:0.008px;">Active</div>
<div class="t" style="left:387.82px;top:972.48px;font-size:16.5px;color:#4b5b7e;font-weight:400;letter-spacing:0.000px;">25</div>
<svg class="i" style="left:537px;top:969.2px;" width="22" height="22" viewBox="537 969.2 22 22"><path d="M540.75 972.75 H555.05 V981.912 L550.112 986.85 H540.75 Z" fill="none" stroke="#2a3047" stroke-width="1.5" stroke-linejoin="round"/><path d="M555.05 981.912 H550.112 V986.85" fill="none" stroke="#2a3047" stroke-width="1.5" stroke-linejoin="round"/></svg>
<div class="t" style="left:571.11px;top:970.94px;font-size:19.5px;color:#1d2236;font-weight:400;letter-spacing:-0.452px;">4. Review</div>
<div class="t" style="left:1266.32px;top:970.94px;font-size:19.5px;color:#df2b44;font-weight:400;letter-spacing:0.785px;">05/02/2024</div>
<div class="t" style="left:1463.42px;top:970.94px;font-size:19.5px;color:#1d2236;font-weight:400;letter-spacing:0.000px;">4d</div>
<div class="t" style="left:1506.00px;top:970.94px;font-size:19.5px;color:#1d2236;font-weight:400;letter-spacing:0.008px;">Active</div>
<div class="t" style="left:387.82px;top:1027.48px;font-size:16.5px;color:#4b5b7e;font-weight:400;letter-spacing:0.000px;">26</div>
<svg class="i" style="left:537px;top:1024.8px;" width="22" height="22" viewBox="537 1024.8 22 22"><path d="M540.75 1028.35 H555.05 V1037.5119999999997 L550.112 1042.4499999999998 H540.75 Z" fill="none" stroke="#2a3047" stroke-width="1.5" stroke-linejoin="round"/><path d="M555.05 1037.5119999999997 H550.112 V1042.4499999999998" fill="none" stroke="#2a3047" stroke-width="1.5" stroke-linejoin="round"/></svg>
<div class="t" style="left:570.72px;top:1025.94px;font-size:19.5px;color:#1d2236;font-weight:400;letter-spacing:0.095px;">5. Approval</div>
<div class="t" style="left:1266.32px;top:1025.94px;font-size:19.5px;color:#df2b44;font-weight:400;letter-spacing:0.785px;">06/02/2024</div>
<div class="t" style="left:1463.42px;top:1025.94px;font-size:19.5px;color:#1d2236;font-weight:400;letter-spacing:0.000px;">1d</div>
<div class="t" style="left:1506.00px;top:1025.94px;font-size:19.5px;color:#1d2236;font-weight:400;letter-spacing:0.008px;">Active</div>
<div class="b" style="left:808px;top:237.4px;width:14px;height:40px;background:linear-gradient(90deg,rgba(255,255,255,0),#fff)"></div>
<div class="b" style="left:822px;top:237.4px;width:22px;height:40px;background:#fff"></div>
<div class="b" style="left:808px;top:404.20000000000005px;width:14px;height:40px;background:linear-gradient(90deg,rgba(255,255,255,0),#fff)"></div>
<div class="b" style="left:822px;top:404.20000000000005px;width:22px;height:40px;background:#fff"></div>
</div>
<div class="b" style="left:348px;top:1040px;width:1452px;height:50px;background:linear-gradient(#ffffff,#fcfcfc 25%,#efeff0)"></div>
<svg class="i" style="left:436px;top:1058px;" width="26" height="20" viewBox="436 1058 26 20"><path d="M441.75 1067.6 H456.65 M449.2 1060.1499999999999 V1075.05" stroke="#1d2236" stroke-width="1.35" stroke-linecap="round"/></svg>
<div class="t" style="left:471.05px;top:1057.94px;font-size:19.5px;color:#1d2236;font-weight:400;letter-spacing:0.432px;">Item</div>
<svg class="i" style="left:520px;top:1056px;" width="52" height="22" viewBox="520 1056 52 22"><path d="M523.2 1067.6 L529.1 1061.4 L535 1067.6" fill="none" stroke="#8b97b4" stroke-width="1.5" stroke-linejoin="round"/><path d="M546.4 1060.9 L554 1067.8 H550 V1073.6 H542.8 V1067.8 H538.8 Z" fill="none" stroke="#8b97b4" stroke-width="1.5" stroke-linejoin="round"/></svg>
<div class="t" style="left:555.74px;top:1057.94px;font-size:19.5px;color:#8b97b4;font-weight:400;letter-spacing:0.000px;">N</div>
<div class="b" style="left:961px;top:501.8px;width:157.4px;height:65.8px;border:4.6px solid rgba(170,205,195,0.35);border-radius:7px;box-sizing:border-box"></div>
<div class="b" style="left:965.9px;top:507.4px;width:147.1px;height:55.6px;border:1.3px solid #2e7058;border-radius:2px;box-sizing:border-box"></div>
<div class="b" style="left:976.2px;top:552px;width:292.8px;height:509.7px;background:#fff;border-radius:14px;box-shadow:0 4px 18px rgba(40,60,100,0.16),0 0 2px rgba(40,60,100,0.10)"></div>
<div class="t" style="left:1008.56px;top:576.91px;font-size:16px;color:#4a5a7c;font-weight:700;letter-spacing:0.443px;">Default Workflow</div>
<div class="b" style="left:977.7px;top:606.2px;width:290px;height:45.4px;background:#eaf3f1;border:1.2px solid #2e7058;border-radius:12px;box-sizing:border-box"></div>
<div class="b" style="left:1011.3px;top:619.0px;width:19.3px;height:19.3px;background:#2f9ae0;border-radius:4px;box-shadow:0 0 0 1px #fff"></div>
<div class="t" style="left:1041.94px;top:619.94px;font-size:19.5px;color:#1d2236;font-weight:400;letter-spacing:-0.219px;">New</div>
<div class="b" style="left:1011.3px;top:666.4px;width:19.3px;height:19.3px;background:#3ec6cf;border-radius:4px;box-shadow:0 0 0 1px #fff"></div>
<div class="t" style="left:1041.74px;top:664.94px;font-size:19.5px;color:#1d2236;font-weight:400;letter-spacing:-0.010px;">In Progress</div>
<div class="b" style="left:1011.3px;top:712.6px;width:19.3px;height:19.3px;background:#45a63c;border-radius:4px;box-shadow:0 0 0 1px #fff"></div>
<div class="t" style="left:1042.53px;top:711.94px;font-size:19.5px;color:#1d2236;font-weight:400;letter-spacing:0.308px;">Completed</div>
<div class="b" style="left:1011.3px;top:758.8px;width:19.3px;height:19.3px;background:#8891ad;border-radius:4px;box-shadow:0 0 0 1px #fff"></div>
<div class="t" style="left:1042.62px;top:757.94px;font-size:19.5px;color:#1d2236;font-weight:400;letter-spacing:0.080px;">On Hold</div>
<div class="b" style="left:1011.3px;top:804.4px;width:19.3px;height:19.3px;background:#8891ad;border-radius:4px;box-shadow:0 0 0 1px #fff"></div>
<div class="t" style="left:1042.53px;top:803.94px;font-size:19.5px;color:#1d2236;font-weight:400;letter-spacing:0.071px;">Cancelled</div>
<div class="b" style="left:971.9px;top:564px;width:299.1px;height:275.6px;border:6px solid #0bcb5e;border-radius:14px;box-sizing:border-box"></div>
<div class="t" style="left:1009.44px;top:849.94px;font-size:19.5px;color:#1d2236;font-weight:400;letter-spacing:0.192px;">Edit workflow</div>
<div class="t" style="left:1008.56px;top:907.91px;font-size:16px;color:#4a5a7c;font-weight:700;letter-spacing:0.342px;">Knowledge Base workflows</div>
<div class="t" style="left:1009.44px;top:949.94px;font-size:19.5px;color:#1d2236;font-weight:400;letter-spacing:0.162px;">Deployment Workflow</div>
<svg class="i" style="left:1214px;top:950px;" width="20" height="20" viewBox="1214 950 20 20"><path d="M1222.0 954.3000000000001 L1228.4 959.6 L1222.0 964.9" fill="none" stroke="#2a3047" stroke-width="1.2" stroke-linecap="round" stroke-linejoin="round"/></svg>
<div class="b" style="left:1009px;top:992.6px;width:228px;height:1.3px;background:#e3e7ef"></div>
<div class="t" style="left:1011.00px;top:1017.94px;font-size:19.5px;color:#1d2236;font-weight:400;letter-spacing:0.189px;">Account workflows</div>
<svg class="i" style="left:1214px;top:1018px;" width="20" height="20" viewBox="1214 1018 20 20"><path d="M1222.0 1022.5 L1228.4 1027.8 L1222.0 1033.1" fill="none" stroke="#2a3047" stroke-width="1.2" stroke-linecap="round" stroke-linejoin="round"/></svg>
<svg class="i" style="left:899.6px;top:168.29999999999998px" width="56.6" height="56.6" viewBox="899.6 168.29999999999998 56.6 56.6"><circle cx="927.9" cy="196.6" r="28.3" fill="rgba(11,203,94,0.17)"/><circle cx="927.9" cy="196.6" r="20" fill="#0bcb5e"/></svg>
<svg class="i" style="left:920px;top:185px;" width="14" height="22" viewBox="920 185 14 22"><path d="M926.8 204.9 V191.6 L923.8 193.6 V190.4 L927.3 187.9 H930.3 V204.9 Z" fill="#fff"/></svg>
<div class="b" style="left:952.3px;top:170px;width:157.4px;height:61.6px;border:6px solid #0bcb5e;border-radius:12px;box-sizing:border-box"></div>
<svg class="i" style="left:916.1px;top:646.1px" width="57.0" height="57.0" viewBox="916.1 646.1 57.0 57.0"><circle cx="944.6" cy="674.6" r="28.5" fill="rgba(11,203,94,0.17)"/><circle cx="944.6" cy="674.6" r="20.6" fill="#0bcb5e"/></svg>
<div class="t" style="left:937.94px;top:661.71px;font-size:24.5px;color:#fff;font-weight:700;letter-spacing:0.000px;">2</div>
<div class="b" style="left:0px;top:0px;width:1802px;height:1px;background:#111"></div>
<div class="b" style="left:0px;top:0px;width:1px;height:1091px;background:#111"></div>
<div class="b" style="left:1800.6px;top:0px;width:1.4px;height:1091px;background:#000"></div>
<div class="b" style="left:0px;top:1089.5px;width:1802px;height:1.5px;background:#000"></div>
<div class="b" style="left:1px;top:1px;width:1.2px;height:1088px;background:rgba(120,170,180,0.45)"></div>
</div></body></html>
